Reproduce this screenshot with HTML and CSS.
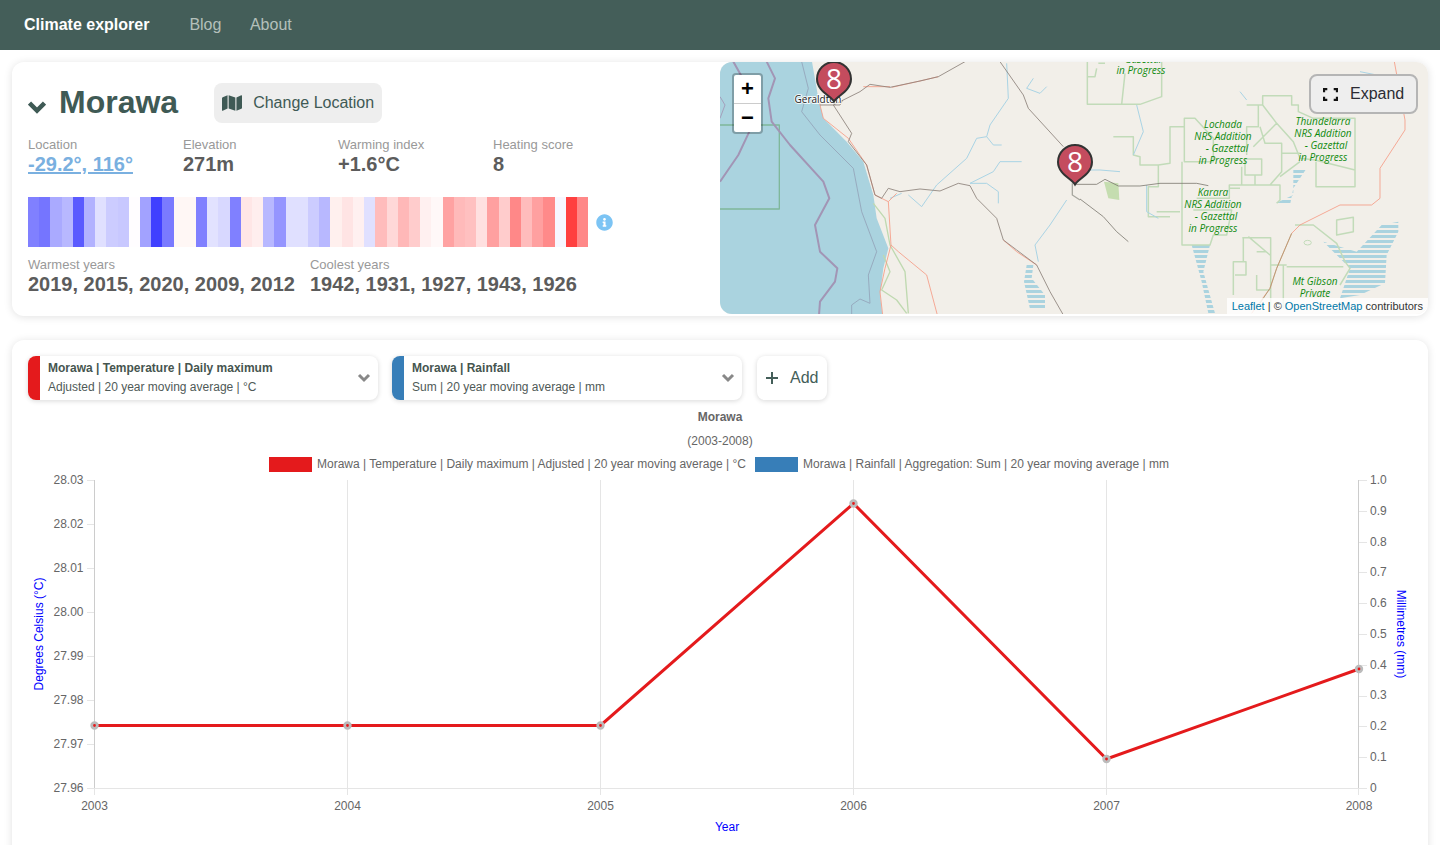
FILE: index.html
```html
<!DOCTYPE html>
<html lang="en">
<head>
    <meta charset="UTF-8">
    <meta name="viewport" content="width=device-width, initial-scale=1.0">
    <title>Climate explorer</title>
    <link rel="stylesheet" href="styles.css">
</head>
<body>
    <nav class="navbar">
        <a class="brand" href="#">Climate explorer</a>
        <a class="nav-link" href="#">Blog</a>
        <a class="nav-link" href="#">About</a>
    </nav>

    <main class="page">
        <section class="card location-card">
            <div class="summary">
                <div class="title-row">
                    <svg class="title-chevron" viewBox="0 0 18 14"><path d="M1.5 3L9 10.5L16.5 3"/></svg>
                    <h1>Morawa</h1>
                    <button class="change-btn">
                        <svg class="map-icon" viewBox="0 0 576 512"><path d="M0 117.66v346.32c0 11.32 11.43 19.06 21.94 14.86L160 416V32L20.12 87.95A32.006 32.006 0 0 0 0 117.66zM192 416l192 64V96L192 32v384zM554.06 33.16L416 96v384l139.88-55.95A31.996 31.996 0 0 0 576 394.34V48.02c0-11.32-11.43-19.06-21.94-14.86z"/></svg>
                        Change Location
                    </button>
                </div>

                <div class="stats">
                    <div>
                        <div class="stat-label">Location</div>
                        <a class="stat-value stat-link" href="#">-29.2°, 116°</a>
                    </div>
                    <div>
                        <div class="stat-label">Elevation</div>
                        <div class="stat-value">271m</div>
                    </div>
                    <div>
                        <div class="stat-label">Warming index</div>
                        <div class="stat-value">+1.6°C</div>
                    </div>
                    <div>
                        <div class="stat-label">Heating score</div>
                        <div class="stat-value">8</div>
                    </div>
                </div>

                <div class="stripes-row">
                    <div class="stripes" id="stripes"></div>
                    <svg class="info-icon" viewBox="0 0 512 512"><path d="M256 8C119.043 8 8 119.083 8 256c0 136.997 111.043 248 248 248s248-111.003 248-248C504 119.083 392.957 8 256 8zm0 110c23.196 0 42 18.804 42 42s-18.804 42-42 42-42-18.804-42-42 18.804-42 42-42zm56 254c0 6.627-5.373 12-12 12h-88c-6.627 0-12-5.373-12-12v-24c0-6.627 5.373-12 12-12h12v-64h-12c-6.627 0-12-5.373-12-12v-24c0-6.627 5.373-12 12-12h64c6.627 0 12 5.373 12 12v100h12c6.627 0 12 5.373 12 12v24z"/></svg>
                </div>

                <div class="years">
                    <div>
                        <div class="stat-label">Warmest years</div>
                        <div class="stat-value">2019, 2015, 2020, 2009, 2012</div>
                    </div>
                    <div>
                        <div class="stat-label">Coolest years</div>
                        <div class="stat-value">1942, 1931, 1927, 1943, 1926</div>
                    </div>
                </div>
            </div>

            <div class="map">
                <svg class="map-svg" viewBox="0 0 708 252">
                    <defs>
                        <pattern id="hatch" width="20" height="15" patternUnits="userSpaceOnUse">
                            <rect width="20" height="9" fill="#aad3df"/>
                        </pattern>
                    </defs>
                    <rect width="708" height="252" fill="#f2efe9"/>

                    <!-- left half of the map, traced at 3x -->
                    <g transform="translate(0,-7) scale(0.33333)" fill="none" stroke-linejoin="round">
                        <path d="M276 20L295 130L310 190L380 260L430 320L460 420L470 490L505 580L490 640L480 720L487 780H-10V20Z" fill="#aad3df"/>
                        <path d="M0 210H178V462H0" stroke="#7fb89b" stroke-width="4"/>
                        <path d="M140 20L165 70L145 130L155 200L210 270L310 380L328 430L285 510L300 590L352 640L345 680L300 740L297 780" stroke="#a295b5" stroke-width="6"/>
                        <path d="M40 20L85 100L88 230L55 300L0 380" stroke="#a295b5" stroke-width="6"/>
                        <path d="M0 125L15 150L0 190" stroke="#a295b5" stroke-width="2.5"/>
                        <path d="M245 20L265 100L245 170L300 240L400 340L425 470L470 590L445 660L450 745L420 732L395 750L395 780" stroke="#93a2b8" stroke-width="2.5"/>

                        <path d="M460 445L495 490L510 570L555 650L565 775M490 600L510 650L485 705L530 735L560 775" stroke="#bfd9b0" stroke-width="4"/>
                        <path d="M860 25L865 130L810 210L800 245L770 250L740 310L650 390L605 455L565 420M800 245L820 270H845M905 320H840L820 350L750 385L800 385L835 410V445M510 430L545 415M980 95L960 115L920 100L940 70M1040 435L990 510L945 570L955 620" stroke="#a9d3e4" stroke-width="3"/>
                        <path d="M295 130L310 190L385 250L440 330L465 420L505 440L513 570L535 590L620 660L652 780M505 440L530 415M513 570L495 640L480 710L488 780M510 95L430 95M515 97L600 78L655 65M850 555L890 590L950 630" stroke="#f59a84" stroke-width="2.5"/>
                        <path d="M340 150L420 110L450 88L510 97L600 78L655 65L735 20M340 150L395 235L385 260L440 330L465 420L485 430L505 400L540 410L600 402L660 408L715 385L750 392L770 430L830 490L850 555L890 585L950 630L990 710L1030 780M840 20L910 120L925 160L1030 275M300 150H360L368 135" stroke="#8a8078" stroke-width="2.5"/>
                        <path d="M1057 385V420L1080 435" stroke="#a8a8a0" stroke-width="4"/>
                        <path d="M920 630H940L935 670L975 720L975 762H930L912 680Z" fill="url(#hatch)"/>
                    </g>

                    <!-- right half of the map -->
                    <g transform="translate(360,-7) scale(0.33333)" fill="none" stroke-linejoin="round">
                        <path d="M72 380L115 385L118 435L85 430Z" fill="#c5ddb0"/>
                        <path d="M905 510L955 500L955 530L920 600L915 685L840 720L780 730L810 640L730 560L830 590Z" fill="url(#hatch)"/>
                        <path d="M335 570H390L370 650L405 775H385L365 680Z" fill="url(#hatch)"/>
                        <path d="M640 345L680 340L640 400L630 450L575 450L640 420Z" fill="url(#hatch)"/>
                        <path d="M22 20V148H180L245 125V20M22 65H45L50 40M135 55L125 148M55 25H75M100 245H160V300L180 305V330H235V395H205V485H270M235 330L270 325V215H313V190H345L400 250V320H313V190M306 320V570H390L400 540H440L455 465H340M448 400V390H600V435L590 445M480 400H448V430H350M500 150H535V215H500V300M535 150H548V122H635V150H655V170L700 190H825V395H708V320M548 150L590 205L640 260L660 310L705 315L825 345M590 205L520 275M540 215L555 265H605V295H660M605 265V350L570 390M660 320L600 365M545 312H495V360H545ZM485 335V390H600M525 360V390M487 548H572V770M490 548V620H460V720M460 620H498V660H465M505 545L570 600M530 590H560M530 660V705H570M572 630H620M645 510H700L770 565L795 620L810 640L780 690M620 635H790M770 495L820 487V530L770 540ZM610 630V760M230 470H300" stroke="#c2dbb9" stroke-width="4.5"/>
                        <ellipse cx="683" cy="563" rx="11" ry="7" stroke="#c2dbb9" stroke-width="3"/>
                        <path d="M0 345L60 345L120 350M170 150L190 230L160 300M200 390L200 470L235 490M480 110L500 135M840 50L890 60" stroke="#a9d3e4" stroke-width="3"/>
                        <path d="M943 20L975 195V225L900 340V430L875 450H780L660 510L635 535L590 640L570 700L515 775" stroke="#f59a84" stroke-width="2.5"/>
                        <path d="M635 535L590 640L570 700L540 745" stroke="#a89a70" stroke-width="2.5"/>
                        <path d="M-15 388H50L75 373L115 393H180L240 385H350L385 392M0 432L70 485L110 530L145 560" stroke="#807c74" stroke-width="2.5"/>
                    </g>

                    <g class="map-label">
                        <text x="423" y="1">Gazettal</text>
                        <text x="421" y="12">in Progress</text>
                        <text x="503" y="66">Lochada</text>
                        <text x="503" y="78">NRS Addition</text>
                        <text x="507" y="90">- Gazettal</text>
                        <text x="503" y="102">in Progress</text>
                        <text x="603" y="63">Thundelarra</text>
                        <text x="603" y="75">NRS Addition</text>
                        <text x="606" y="87">- Gazettal</text>
                        <text x="603" y="99">in Progress</text>
                        <text x="493" y="134">Karara</text>
                        <text x="493" y="146">NRS Addition</text>
                        <text x="496" y="158">- Gazettal</text>
                        <text x="493" y="170">in Progress</text>
                        <text x="595" y="223">Mt Gibson</text>
                        <text x="595" y="235">Private</text>
                    </g>

                    <text class="town-label" x="98" y="41">Geraldton</text>

                    <g transform="translate(114,17)">
                        <path class="pin" d="M0 22.5C-3 17-17 12-17 0A17 17 0 1 1 17 0C17 12 3 17 0 22.5Z"/>
                        <text class="pin-text" y="10">8</text>
                    </g>
                    <g transform="translate(355,100)">
                        <path class="pin" d="M0 22.5C-3 17-17 12-17 0A17 17 0 1 1 17 0C17 12 3 17 0 22.5Z"/>
                        <text class="pin-text" y="10">8</text>
                    </g>
                </svg>

                <div class="zoom-control">
                    <div class="zoom-btn">+</div>
                    <div class="zoom-btn">−</div>
                </div>

                <button class="expand-btn">
                    <svg class="expand-icon" viewBox="0 0 14 12"><path d="M1 4V1H4M10 1H13V4M13 8V11H10M4 11H1V8"/></svg>
                    Expand
                </button>

                <div class="attribution"><a href="#">Leaflet</a> | © <a href="#">OpenStreetMap</a> contributors</div>
            </div>
        </section>

        <section class="card chart-card">
            <div class="selectors">
                <div class="selector">
                    <span class="selector-color color-red"></span>
                    <div class="selector-text">
                        <strong>Morawa | Temperature | Daily maximum</strong>
                        <span>Adjusted | 20 year moving average | °C</span>
                    </div>
                    <svg class="selector-chevron" viewBox="0 0 14 12"><path d="M2 3L7 8L12 3"/></svg>
                </div>
                <div class="selector">
                    <span class="selector-color color-blue"></span>
                    <div class="selector-text">
                        <strong>Morawa | Rainfall</strong>
                        <span>Sum | 20 year moving average | mm</span>
                    </div>
                    <svg class="selector-chevron" viewBox="0 0 14 12"><path d="M2 3L7 8L12 3"/></svg>
                </div>
                <button class="add-btn">
                    <svg class="plus-icon" viewBox="0 0 12 12"><path d="M6 0V12M0 6H12"/></svg>
                    Add
                </button>
            </div>

            <!-- viewBox uses page coordinates so the numbers can be read off the screenshot -->
            <svg class="chart" viewBox="28 408 1384 460">
                <text class="chart-title" x="720" y="421">Morawa</text>
                <text class="chart-sub" x="720" y="445">(2003-2008)</text>

                <rect x="269" y="457" width="43" height="15" fill="#e41a1c"/>
                <text class="chart-text" x="317" y="468">Morawa | Temperature | Daily maximum | Adjusted | 20 year moving average | °C</text>
                <rect x="755" y="457" width="43" height="15" fill="#377eb8"/>
                <text class="chart-text" x="803" y="468">Morawa | Rainfall | Aggregation: Sum | 20 year moving average | mm</text>

                <g class="grid">
                    <path d="M347.5 480V795M600.5 480V795M853.5 480V795M1106.5 480V795"/>
                    <path d="M87 788.5H1367M94.5 788V795M1358.5 788V795"/>
                    <path d="M87 480.5H94M87 524.5H94M87 568.5H94M87 612.5H94M87 656.5H94M87 700.5H94M87 744.5H94"/>
                    <path d="M1359 480.5H1367M1359 511.5H1367M1359 542.5H1367M1359 572.5H1367M1359 603.5H1367M1359 634.5H1367M1359 665.5H1367M1359 696.5H1367M1359 726.5H1367M1359 757.5H1367"/>
                </g>
                <path class="axis" d="M94.5 480V788M1358.5 480V788"/>

                <g class="chart-text left-ticks">
                    <text x="83.5" y="484">28.03</text>
                    <text x="83.5" y="528">28.02</text>
                    <text x="83.5" y="572">28.01</text>
                    <text x="83.5" y="616">28.00</text>
                    <text x="83.5" y="660">27.99</text>
                    <text x="83.5" y="704">27.98</text>
                    <text x="83.5" y="748">27.97</text>
                    <text x="83.5" y="792">27.96</text>
                </g>
                <g class="chart-text">
                    <text x="1370" y="484">1.0</text>
                    <text x="1370" y="515">0.9</text>
                    <text x="1370" y="546">0.8</text>
                    <text x="1370" y="576">0.7</text>
                    <text x="1370" y="607">0.6</text>
                    <text x="1370" y="638">0.5</text>
                    <text x="1370" y="669">0.4</text>
                    <text x="1370" y="699">0.3</text>
                    <text x="1370" y="730">0.2</text>
                    <text x="1370" y="761">0.1</text>
                    <text x="1370" y="792">0</text>
                </g>
                <g class="chart-text x-ticks">
                    <text x="94.5" y="810">2003</text>
                    <text x="347.5" y="810">2004</text>
                    <text x="600.5" y="810">2005</text>
                    <text x="853.5" y="810">2006</text>
                    <text x="1106.5" y="810">2007</text>
                    <text x="1359" y="810">2008</text>
                </g>

                <text class="axis-title" x="727" y="831">Year</text>
                <text class="axis-title" transform="translate(43,634) rotate(-90)">Degrees Celsius (°C)</text>
                <text class="axis-title" transform="translate(1397,634) rotate(90)">Millimetres (mm)</text>

                <polyline class="data-line" points="94.5,725.5 347.5,725.5 600.5,725.5 853.5,503.5 1106.5,759 1359,669"/>
                <g class="points">
                    <circle cx="94.5" cy="725.5" r="2.8"/>
                    <circle cx="347.5" cy="725.5" r="2.8"/>
                    <circle cx="600.5" cy="725.5" r="2.8"/>
                    <circle cx="853.5" cy="503.5" r="2.8"/>
                    <circle cx="1106.5" cy="759" r="2.8"/>
                    <circle cx="1359" cy="669" r="2.8"/>
                </g>
            </svg>
        </section>
    </main>

    <script src="script.js"></script>
</body>
</html>
```

FILE: styles.css
```css
html, body {
    height: 100vh;
    overflow: hidden;
}

body {
    margin: 0;
    background-color: #fff;
    font-family: 'Liberation Sans', Arial, sans-serif;
    color: #4a4a4a;
}

a {
    text-decoration: none;
}

button {
    font-family: inherit;
    cursor: pointer;
}

.navbar {
    height: 50px;
    background-color: #445e59;
    display: flex;
    align-items: center;
    padding-left: 24px;
    font-size: 16px;
}

.brand {
    color: #fff;
    font-weight: bold;
    margin-right: 40px;
}

.nav-link {
    color: #b4c0bb;
    margin-right: 28.5px;
}

.page {
    padding: 12px;
}

.card {
    background-color: #fff;
    border-radius: 12px;
    box-shadow: 0 1px 8px rgba(10, 10, 10, 0.12);
}

.location-card {
    display: flex;
    align-items: flex-start;
    height: 254px;
    margin-bottom: 24px;
}

.summary {
    flex: 1;
    padding: 21px 16px 0;
}

.title-row {
    display: flex;
    align-items: center;
    height: 40px;
}

.title-chevron {
    width: 18px;
    height: 14px;
    fill: none;
    stroke: #3f5a55;
    stroke-width: 4.5;
    margin-top: 7px;
    margin-right: 13px;
}

h1 {
    margin: 0 36px 2px 0;
    font-size: 32px;
    line-height: 38px;
    color: #3f5a55;
}

.change-btn {
    width: 168px;
    height: 40px;
    background-color: #eee;
    border: none;
    border-radius: 8px;
    color: #3f5a55;
    font-size: 16px;
    padding: 0 0 0 8px;
    display: flex;
    align-items: center;
    gap: 11px;
    white-space: nowrap;
}

.map-icon {
    width: 20px;
    height: 18px;
    fill: #3f5a55;
}

.stats {
    display: grid;
    grid-template-columns: repeat(4, 155px);
    margin-top: 15px;
}

.stat-label {
    font-size: 13px;
    line-height: 14px;
    margin-bottom: 1px;
    color: #999;
}

.stat-value {
    font-size: 20px;
    line-height: 22px;
    font-weight: bold;
    color: #5c5c5c;
}

.stat-link {
    color: #7ab0e0;
    text-decoration: underline;
}

.stripes-row {
    display: flex;
    align-items: center;
    margin-top: 22px;
}

.stripes {
    width: 560px;
    height: 50px;
    display: flex;
}

.stripes span {
    flex: 1;
}

.info-icon {
    width: 17px;
    height: 17px;
    margin-left: 8px;
    fill: #7cc4f4;
}

.years {
    display: flex;
    gap: 15px;
    margin-top: 11px;
}

.map {
    position: relative;
    width: 708px;
    height: 252px;
    border-radius: 12px;
    overflow: hidden;
    flex-shrink: 0;
}

.map-svg {
    display: block;
    width: 708px;
    height: 252px;
}

.map-label text {
    font-family: 'Open Sans', sans-serif;
    font-style: italic;
    font-size: 10px;
    fill: #0e8a0e;
    text-anchor: middle;
}

.town-label {
    font-family: 'Open Sans', sans-serif;
    font-size: 10px;
    fill: #222;
    text-anchor: middle;
    stroke: rgba(255, 255, 255, 0.85);
    stroke-width: 2px;
    paint-order: stroke;
}

.pin {
    fill: #c44c5e;
    stroke: #333;
    stroke-width: 2px;
}

.pin-text {
    font-family: 'Open Sans', sans-serif;
    font-size: 28px;
    fill: #fff;
    text-anchor: middle;
}

.zoom-control {
    position: absolute;
    left: 12px;
    top: 11px;
    width: 31px;
    box-sizing: border-box;
    border: 2px solid rgba(0, 0, 0, 0.25);
    border-radius: 4px;
    background-clip: padding-box;
    background-color: #fff;
}

.zoom-btn {
    height: 28px;
    line-height: 28px;
    text-align: center;
    font-size: 22px;
    font-weight: bold;
    color: #000;
}

.zoom-btn + .zoom-btn {
    border-top: 1px solid #ccc;
}

.expand-btn {
    position: absolute;
    right: 10px;
    top: 12px;
    width: 109px;
    height: 40px;
    display: flex;
    align-items: center;
    gap: 12px;
    padding: 0 0 0 12px;
    background-color: #eee;
    border: 2px solid #b5b5b5;
    border-radius: 8px;
    font-size: 16px;
    color: #2b2b33;
}

.expand-icon {
    width: 15px;
    height: 13px;
    fill: none;
    stroke: #111;
    stroke-width: 2;
}

.attribution {
    position: absolute;
    right: 0;
    bottom: 0;
    height: 16px;
    line-height: 16px;
    padding: 0 5px;
    font-size: 11px;
    color: #333;
    background-color: rgba(255, 255, 255, 0.8);
}

.attribution a {
    color: #0078a8;
}

.chart-card {
    padding: 16px;
}

.selectors {
    display: flex;
    gap: 14px;
}

.selector {
    width: 350px;
    height: 44px;
    display: flex;
    align-items: center;
    background-color: #fff;
    border-radius: 8px;
    box-shadow: 0 1px 5px rgba(10, 10, 10, 0.16);
    overflow: hidden;
    box-sizing: border-box;
}

.selector-color {
    width: 12px;
    height: 44px;
}

.color-red {
    background-color: #e41a1c;
}

.color-blue {
    background-color: #377eb8;
}

.selector-text {
    flex: 1;
    padding-left: 8px;
    font-size: 12px;
    line-height: 19px;
    color: #4f5a57;
    display: flex;
    flex-direction: column;
}

.selector-text strong {
    color: #46554f;
}

.selector-chevron {
    width: 14px;
    height: 12px;
    fill: none;
    stroke: #888;
    stroke-width: 3;
    margin-right: 7px;
}

.add-btn {
    width: 70px;
    height: 44px;
    margin-left: 1px;
    display: flex;
    align-items: center;
    gap: 12px;
    padding: 0 0 0 9px;
    background-color: #fff;
    border: none;
    border-radius: 8px;
    box-shadow: 0 1px 5px rgba(10, 10, 10, 0.16);
    font-size: 16px;
    color: #445e59;
}

.plus-icon {
    width: 12px;
    height: 12px;
    fill: none;
    stroke: #445e59;
    stroke-width: 2;
}

.chart {
    display: block;
    width: 1384px;
    height: 460px;
    margin-top: 8px;
}

.chart text {
    font-family: 'Liberation Sans', Arial, sans-serif;
    font-size: 12px;
}

.chart-text text, text.chart-text, .chart-sub {
    fill: #666;
}

.chart-title {
    fill: #666;
    font-weight: bold;
    text-anchor: middle;
}

.chart-sub {
    text-anchor: middle;
}

.left-ticks text {
    text-anchor: end;
}

.x-ticks text {
    text-anchor: middle;
}

.grid path {
    fill: none;
    stroke: #e5e5e5;
}

.axis {
    fill: none;
    stroke: #ccc;
}

.axis-title {
    fill: #0000ff;
    text-anchor: middle;
}

.data-line {
    fill: none;
    stroke: #e41a1c;
    stroke-width: 3;
}

.points circle {
    fill: #e41a1c;
    stroke: #bbb;
    stroke-width: 2.8;
}
```

FILE: script.js
```js
// one stripe per year, coolest blue to warmest red
const stripeColours = [
    '#8080ff', '#7575ff', '#aaaaff', '#b8b8ff', '#5a5aff', '#b2b2ff', '#e0e0ff', '#ccccff', '#c8c8ff', '#fffdff',
    '#a2a2ff', '#4040ff', '#7a7aff', '#fff7f5', '#fff7f5', '#8080ff', '#e2e2ff', '#d8d8ff', '#8080ff', '#ffe6e6',
    '#ffeeee', '#b8b8ff', '#9595ff', '#e0e0ff', '#e0e0ff', '#ccccff', '#b8b8ff', '#fff0ee', '#ffe4e4', '#fff0f0',
    '#e0e0ff', '#ffbcbc', '#ffd8d8', '#ffb8b8', '#ffcccc', '#fff0f0', '#fff8f8', '#ffa2a2', '#ffbaba', '#ffc0c0',
    '#ffe0e0', '#ffa0a0', '#ffcccc', '#ff8888', '#ffbcbc', '#ffa0a0', '#ff8a8a', '#f7f7ff', '#ff4040', '#ff8888'
];

const stripes = document.getElementById('stripes');
stripeColours.forEach(colour => {
    const stripe = document.createElement('span');
    stripe.style.backgroundColor = colour;
    stripes.appendChild(stripe);
});
```
